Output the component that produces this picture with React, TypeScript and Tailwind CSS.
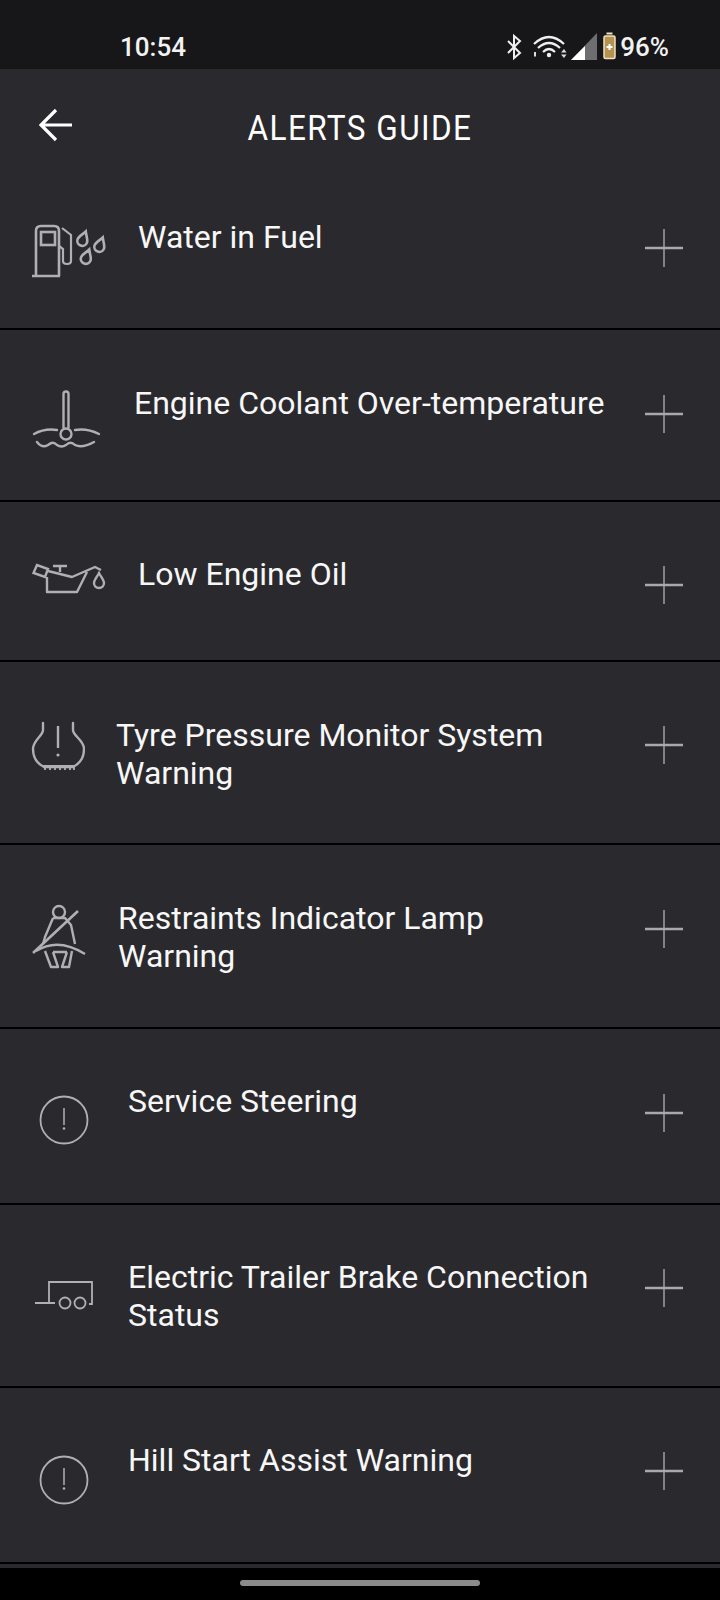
import type { ReactNode } from 'react';

const iconClass = 'fill-none stroke-[#b0b0b4] stroke-[2.4]';

function AlertCircle({ cy }: { cy: number }) {
  return (
    <>
      <circle cx="64" cy={cy} r="23.5" strokeWidth="1.8" />
      <path d={`M64 ${cy - 12}V${cy + 5}`} strokeWidth="1.5" />
      <circle cx="64" cy={cy + 8.5} r="1.3" className="fill-[#b0b0b4] stroke-none" />
    </>
  );
}

function Drop({ x, y, tilt = 20 }: { x: number; y: number; tilt?: number }) {
  return (
    <path
      transform={`rotate(${tilt} ${x} ${y})`}
      d={`M${x} ${y - 8}C${x + 2} ${y - 4} ${x + 5} ${y - 1} ${x + 5} ${y + 2}A5 5 0 0 1 ${x - 5} ${y + 2}C${x - 5} ${y - 1} ${x - 2} ${y - 4} ${x} ${y - 8}Z`}
    />
  );
}

const rows: {
  title: string;
  height: string;
  textLeft: string;
  textTop: string;
  iconBox: string;
  plusTop: string;
  viewBox: string;
  icon: ReactNode;
}[] = [
  {
    title: 'Water in Fuel',
    height: 'h-[167px]',
    textLeft: 'w-[138px]',
    textTop: 'mt-[55px]',
    iconBox: 'ml-[31px] w-[78px] h-[56px] mt-[61px]',
    plusTop: 'mt-[66px]',
    viewBox: '31 224 78 56',
    icon: (
      <>
        <path d="M32 276H60M36 276V231Q36 226 41 226H54Q59 226 59 231V276" strokeWidth="2.6" />
        <rect x="41" y="232" width="14" height="13" strokeWidth="2.6" />
        <path d="M62 228L71 235V261Q71 264 67 264Q63 264 63 261V249L59 246" strokeWidth="2.2" />
        <g strokeWidth="2.6">
          <Drop x={83} y={239} />
          <Drop x={100} y={245} />
          <Drop x={86.5} y={257} />
        </g>
      </>
    ),
  },
  {
    title: 'Engine Coolant Over-temperature',
    height: 'h-[172px]',
    textLeft: 'w-[134px]',
    textTop: 'mt-[54px]',
    iconBox: 'ml-[32px] w-[70px] h-[60px] mt-[59px]',
    plusTop: 'mt-[65px]',
    viewBox: '32 389 70 60',
    icon: (
      <>
        <path d="M63.5 428V394A2.5 2.5 0 0 1 68.5 394V428" />
        <circle cx="66" cy="434" r="5.5" />
        <path d="M34 434Q45 428 57 430M75 430Q87 428 99 434" strokeLinecap="round" />
        <path d="M37 442C41 447 45 447 48 445C52 442 54 442 57 445C60 447 63 447 66 445C69 442 72 442 75 445C79 447 85 447 94 442" strokeLinecap="round" />
      </>
    ),
  },
  {
    title: 'Low Engine Oil',
    height: 'h-[160px]',
    textLeft: 'w-[138px]',
    textTop: 'mt-[53px]',
    iconBox: 'ml-[32px] w-[74px] h-[34px] mt-[59px]',
    plusTop: 'mt-[64px]',
    viewBox: '32 561 74 34',
    icon: (
      <>
        <path d="M33.5 573L37 565L48 569L45 577Z" />
        <path d="M48 571L72 577L95 567L101 570M87 572L77 592H47V577" strokeLinejoin="round" />
        <path d="M53 566H67M60 566V572" />
        <Drop x={99} y={581} tilt={0} />
      </>
    ),
  },
  {
    title: 'Tyre Pressure Monitor System Warning',
    height: 'h-[183px]',
    textLeft: 'w-[116px]',
    textTop: 'mt-[54px]',
    iconBox: 'ml-[31px] w-[54px] h-[52px] mt-[59px]',
    plusTop: 'mt-[64px]',
    viewBox: '31 721 54 52',
    icon: (
      <>
        <path d="M43 723V730C43 736 33 740 33 749C33 758 38 764 44 767H73C79 764 84 758 84 749C84 740 73 736 73 730V723" strokeLinecap="round" />
        <path d="M58 726V748" />
        <circle cx="58" cy="755" r="1.6" className="fill-[#b0b0b4] stroke-none" />
        <path d="M43 766H75M45 766V770M50 766V770M55 766V770M60 766V770M65 766V770M70 766V770M74 766V770" strokeWidth="1.8" />
      </>
    ),
  },
  {
    title: 'Restraints Indicator Lamp Warning',
    height: 'h-[184px]',
    textLeft: 'w-[118px]',
    textTop: 'mt-[54px]',
    iconBox: 'ml-[31px] w-[56px] h-[66px] mt-[59px]',
    plusTop: 'mt-[65px]',
    viewBox: '31 904 56 66',
    icon: (
      <>
        <circle cx="59" cy="912" r="6" />
        <path d="M53 918L45 937L43 944M53 918H65L71 925L75 944" strokeLinejoin="round" />
        <path d="M78 911L33 953" strokeWidth="2.6" />
        <path d="M36 951Q58 937 85 954" />
        <path d="M45 951L51 967H58L53 952M72 951L69 967H62L67 952M53 952H67" strokeLinejoin="round" />
      </>
    ),
  },
  {
    title: 'Service Steering',
    height: 'h-[176px]',
    textLeft: 'w-[128px]',
    textTop: 'mt-[53px]',
    iconBox: 'ml-[39px] w-[50px] h-[50px] mt-[66px]',
    plusTop: 'mt-[65px]',
    viewBox: '39 1095 50 50',
    icon: <AlertCircle cy={1120} />,
  },
  {
    title: 'Electric Trailer Brake Connection Status',
    height: 'h-[183px]',
    textLeft: 'w-[128px]',
    textTop: 'mt-[53px]',
    iconBox: 'ml-[34px] w-[60px] h-[30px] mt-[75px]',
    plusTop: 'mt-[64px]',
    viewBox: '34 1280 60 30',
    icon: (
      <g strokeWidth="1.8">
        <path d="M35 1303H55M49 1303V1282H92V1304H89" />
        <circle cx="65" cy="1303" r="5.5" />
        <circle cx="80" cy="1303" r="5.5" />
      </g>
    ),
  },
  {
    title: 'Hill Start Assist Warning',
    height: 'h-[176px]',
    textLeft: 'w-[128px]',
    textTop: 'mt-[53px]',
    iconBox: 'ml-[39px] w-[50px] h-[50px] mt-[67px]',
    plusTop: 'mt-[64px]',
    viewBox: '39 1455 50 50',
    icon: <AlertCircle cy={1480} />,
  },
];

function StatusIcons() {
  return (
    <svg viewBox="505 30 115 34" className="w-[115px] h-[34px]">
      <path d="M508 41L520 53L514 58V36L520 41L508 53" className="fill-none stroke-[#efefef] stroke-2" />
      <path d="M534 44Q549 30 564 44M538 48Q549 38 560 48M543 52Q549 46 555 52" className="fill-none stroke-[#efefef] stroke-[2.2]" />
      <circle cx="549" cy="55" r="2.2" className="fill-[#efefef]" />
      <path d="M561 52.5L564 49L566.5 52.5ZM561 54.5L564 58L566.5 54.5Z" className="fill-[#dcdcdc]" />
      <path d="M535 52V56.5" className="fill-none stroke-[#dcdcdc] stroke-2" />
      <path d="M571 60L597 33V60Z" className="fill-[#6e6e70]" />
      <path d="M571 60L585 46V60Z" className="fill-white" />
      <rect x="604" y="36" width="11" height="22.5" rx="1.5" className="fill-[#b5924f] stroke-[#f0e2c4] stroke-[1.5]" />
      <rect x="606.5" y="32.5" width="6" height="2" className="fill-[#f0e2c4]" />
      <path d="M606.5 47H612.5M609.5 44V50" className="stroke-white stroke-2" />
    </svg>
  );
}

export default function App() {
  return (
    <div className="w-[720px] h-[1600px] overflow-hidden bg-black font-['Roboto',sans-serif] text-white">
      <div className="h-[69px] bg-[#17171a] flex items-start justify-between">
        <div className="ml-[120px] mt-[32px] text-[26px] leading-[30px] font-medium text-[#f2f2f2]">10:54</div>
        <div className="flex items-start mr-[51px] mt-[30px]">
          <StatusIcons />
          <div className="mt-[2px] text-[26px] leading-[30px] font-medium text-[#f2f2f2]">96%</div>
        </div>
      </div>

      <div className="h-[1499px] bg-[#2a2a2e]">
        <div className="h-[94px] grid grid-cols-[1fr_auto_1fr] items-start">
          <svg viewBox="0 0 34 34" className="w-[34px] h-[34px] ml-[39px] mt-[39px] fill-none stroke-white stroke-[3.2]">
            <path d="M33 17H3M17 2L2 17L17 32" />
          </svg>
          <div className="mt-[41px] text-[35px] leading-[38px] font-normal tracking-[1.6px] scale-x-[0.9]">ALERTS GUIDE</div>
          <div />
        </div>

        {rows.map((row) => (
          <div key={row.title} className={`flex items-start border-b-2 border-black ${row.height}`}>
            <div className={`shrink-0 ${row.textLeft}`}>
              <svg viewBox={row.viewBox} className={`${row.iconBox} ${iconClass}`}>
                {row.icon}
              </svg>
            </div>
            <div className={`flex-1 ${row.textTop} text-[32px] leading-[38px] text-[#f7f7f7]`}>{row.title}</div>
            <svg viewBox="0 0 38 38" className={`w-[38px] h-[38px] shrink-0 ml-[40px] mr-[37px] ${row.plusTop} fill-none stroke-[#a9a9ad]`}>
              <path d="M0 19H38" strokeWidth="2.4" />
              <path d="M19 0V38" strokeWidth="1.4" />
            </svg>
          </div>
        ))}
      </div>

      <div className="flex justify-center pt-[12px]">
        <div className="w-[240px] h-[6px] rounded-full bg-[#8b8b8b]" />
      </div>
    </div>
  );
}
